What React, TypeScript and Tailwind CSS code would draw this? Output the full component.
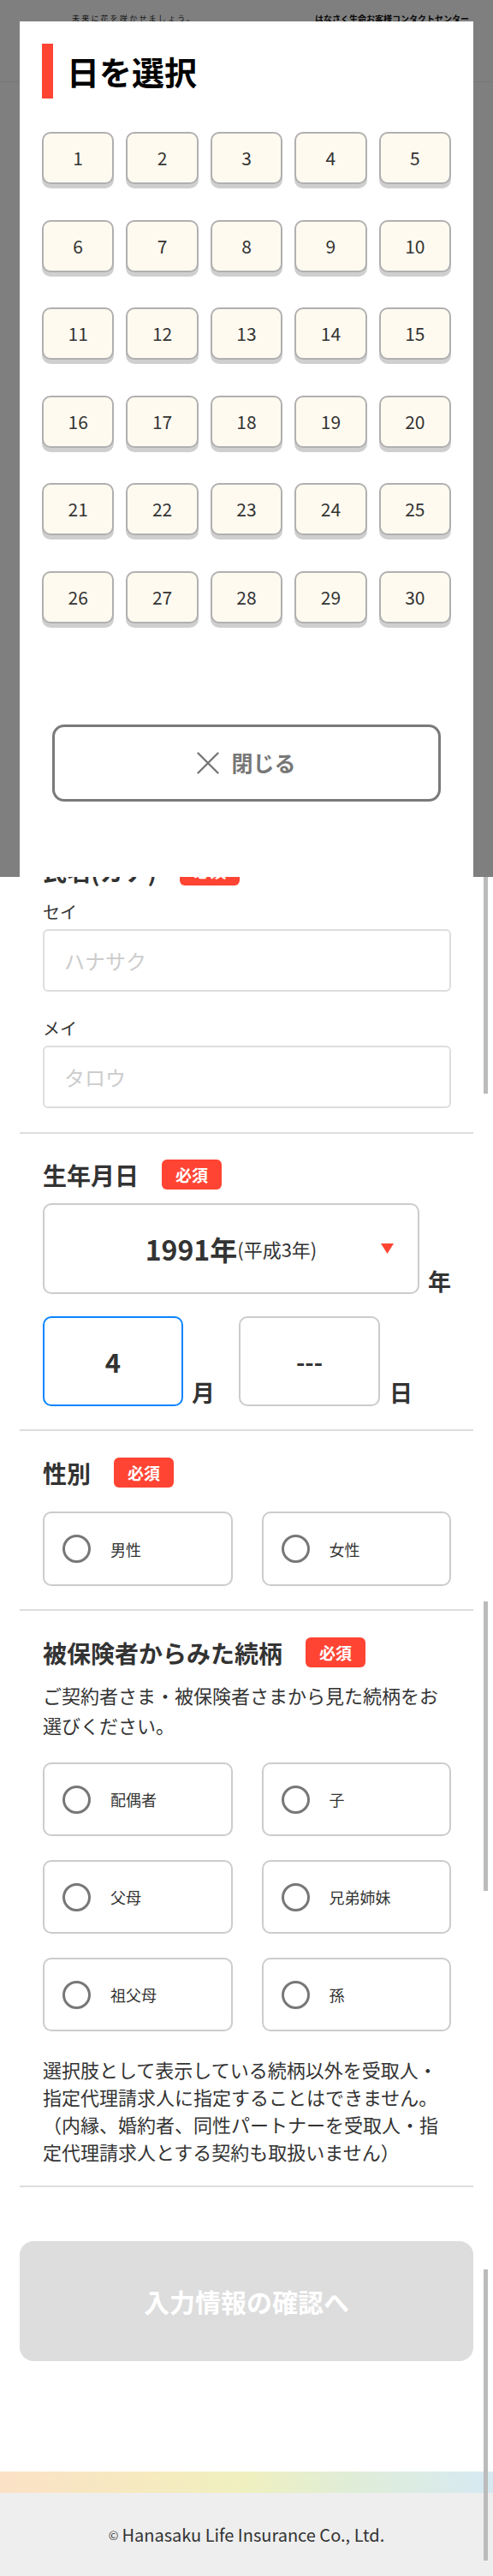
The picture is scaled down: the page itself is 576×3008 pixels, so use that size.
import type { ReactNode } from 'react'

const DAYS = Array.from({ length: 30 }, (_, i) => i + 1)

const RELATIONS = ['配偶者', '子', '父母', '兄弟姉妹', '祖父母', '孫']

/** 必須バッジ */
function Required() {
  return (
    <span className="ml-[27px] inline-flex h-[35px] w-[70px] items-center justify-center rounded-[6px] bg-[#ff4433] text-[19px] font-bold leading-none text-white">
      必須
    </span>
  )
}

function SectionTitle({ children }: { children: ReactNode }) {
  return (
    <div className="flex h-[35px] items-center">
      <h2 className="text-[28px] font-bold leading-none text-[#333]">{children}</h2>
      <Required />
    </div>
  )
}

function Radio({ label, height }: { label: string; height: string }) {
  return (
    <label className={`flex ${height} items-center rounded-[10px] border-2 border-[#ccc] bg-white pl-[21px]`}>
      <span className="h-[33px] w-[33px] shrink-0 rounded-full border-[3px] border-[#777]" />
      <span className="ml-[23px] text-[18px] leading-none text-[#333]">{label}</span>
    </label>
  )
}

function Section({ children, className = '' }: { children: ReactNode; className?: string }) {
  return <section className={`border-b-2 border-[#ddd] pl-[27px] pr-[26px] ${className}`}>{children}</section>
}

/** 日選択モーダル */
function DayModal() {
  return (
    <div className="absolute left-0 top-0 h-[1024px] w-full bg-black/50">
      <div className="absolute left-[23px] top-[25px] h-[999px] w-[530px] overflow-hidden bg-white px-[26px] pt-[26px]">
        <div className="flex items-center">
          <span className="h-[64px] w-[13px] bg-[#ff4433]" />
          <h1 className="ml-[16px] text-[38px] font-bold leading-none text-black">日を選択</h1>
        </div>

        <div className="mt-[39px] grid grid-cols-5 gap-x-[14px] gap-y-[41.5px]">
          {DAYS.map((d) => (
            <button
              key={d}
              className="flex h-[61px] items-center justify-center rounded-[10px] border-2 border-[#b0b0b0] bg-[#fffaf0] text-[21px] leading-none text-[#333] shadow-[0_5px_0_#cfcfcf]"
            >
              {d}
            </button>
          ))}
        </div>

        <button className="mx-[12px] mt-[118px] flex h-[90px] w-[454px] items-center justify-center rounded-[14px] border-[3px] border-[#7a7a7a] text-[25px] font-bold leading-none text-[#777]">
          <svg width="26" height="26" viewBox="0 0 26 26" fill="none" stroke="#777" strokeWidth="2.4" strokeLinecap="round">
            <line x1="1.5" y1="1.5" x2="24.5" y2="24.5" />
            <line x1="24.5" y1="1.5" x2="1.5" y2="24.5" />
          </svg>
          <span className="ml-[14px]">閉じる</span>
        </button>
      </div>
    </div>
  )
}

export default function App() {
  return (
    <div className="relative min-h-[3008px] w-[576px] bg-white font-['Noto_Sans_CJK_JP',sans-serif] text-[#333]">
      {/* ヘッダー */}
      <header className="flex h-[96px] items-start justify-between border-b border-[#eee] pl-[84px] pr-[28px] pt-[15px]">
        <span className="text-[9px] leading-[14px] tracking-[2.2px] text-[#333]">未来に花を咲かせましょう。</span>
        <span className="text-[10px] font-bold leading-[14px] text-[#111]">はなさく生命お客様コンタクトセンター</span>
      </header>

      <main className="mx-[23px]">
        {/* モーダルの下に隠れている入力欄 */}
        <div className="h-[872px] border-b-2 border-[#ddd]" />

        <Section className="pb-[28px] pt-[31px]">
          <SectionTitle>氏名(カナ)</SectionTitle>
          <div className="mt-[17px] text-[20px] leading-[28px] text-[#333]">セイ</div>
          <input
            placeholder="ハナサク"
            className="mt-[6px] block h-[73px] w-full rounded-[6px] border-2 border-[#ddd] px-[23px] text-[24px] outline-none placeholder:text-[#ccc]"
          />
          <div className="mt-[29px] text-[20px] leading-[28px] text-[#333]">メイ</div>
          <input
            placeholder="タロウ"
            className="mt-[6px] block h-[73px] w-full rounded-[6px] border-2 border-[#ddd] px-[23px] text-[24px] outline-none placeholder:text-[#ccc]"
          />
        </Section>

        <Section className="pb-[27px] pt-[30px]">
          <SectionTitle>生年月日</SectionTitle>
          <div className="mt-[16px] flex items-end">
            <div className="relative flex h-[106px] w-[440px] items-center justify-center rounded-[10px] border-2 border-[#ccc]">
              <span className="text-[32px] font-bold leading-none text-[#333]">1991年</span>
              <span className="text-[22px] leading-none text-[#333]">(平成3年)</span>
              <svg className="absolute right-[28px] top-[45px]" width="15" height="12" viewBox="0 0 15 12">
                <polygon points="0,0 15,0 7.5,12" fill="#ff4433" />
              </svg>
            </div>
            <span className="mb-[2px] ml-[10px] text-[27px] font-bold leading-none text-[#333]">年</span>
          </div>
          <div className="mt-[26px] flex items-end">
            <div className="flex h-[105px] w-[164px] items-center justify-center rounded-[10px] border-2 border-[#0a84ff] text-[31px] font-bold leading-none text-[#333]">
              4
            </div>
            <span className="mb-[3px] ml-[10px] text-[27px] font-bold leading-none text-[#333]">月</span>
            <div className="ml-[28px] flex h-[105px] w-[165px] items-center justify-center rounded-[10px] border-2 border-[#ccc] text-[28px] font-bold leading-none text-[#333]">
              ---
            </div>
            <span className="mb-[3px] ml-[11px] text-[27px] font-bold leading-none text-[#333]">日</span>
          </div>
        </Section>

        <Section className="pb-[27px] pt-[31px]">
          <SectionTitle>性別</SectionTitle>
          <div className="mt-[28px] grid grid-cols-2 gap-x-[34px]">
            <Radio label="男性" height="h-[87px]" />
            <Radio label="女性" height="h-[87px]" />
          </div>
        </Section>

        <Section className="pb-[24px] pt-[31px]">
          <SectionTitle>被保険者からみた続柄</SectionTitle>
          <p className="mt-[15px] text-[22px] leading-[35px] text-[#333]">
            ご契約者さま・被保険者さまから見た続柄をお選びください。
          </p>
          <div className="mt-[26px] grid grid-cols-2 gap-x-[34px] gap-y-[28px]">
            {RELATIONS.map((r) => (
              <Radio key={r} label={r} height="h-[86px]" />
            ))}
          </div>
          <p className="mt-[28px] text-[22px] leading-[32px] text-[#333]">
            選択肢として表示している続柄以外を受取人・指定代理請求人に指定することはできません。
            <br />
            （内縁、婚約者、同性パートナーを受取人・指定代理請求人とする契約も取扱いません）
          </p>
        </Section>

        <button className="mt-[63px] flex h-[140px] w-full items-center justify-center rounded-[16px] bg-[#dddddd] text-[30px] font-bold leading-none text-white">
          入力情報の確認へ
        </button>
      </main>

      <div className="mt-[129px] h-[25px] bg-[linear-gradient(90deg,#fbe1c6_0%,#f6eac0_30%,#eff0c0_50%,#dfedd8_72%,#d6e9f2_100%)]" />
      <footer className="flex h-[97px] items-center justify-center bg-[#eeeeee] text-[20px] leading-none text-[#333]">
        <span className="mr-[4px] text-[14px]">©</span>Hanasaku Life Insurance Co., Ltd.
      </footer>

      <DayModal />

      {/* スクロールバーの跡 */}
      <div className="absolute left-[565px] top-[1024px] h-[253px] w-[5px] bg-[#bbbbbb]" />
      <div className="absolute left-[565px] top-[1870px] h-[338px] w-[5px] bg-[#bbbbbb]" />
      <div className="absolute left-[565px] top-[2650px] h-[340px] w-[5px] bg-[#bbbbbb]" />
    </div>
  )
}
